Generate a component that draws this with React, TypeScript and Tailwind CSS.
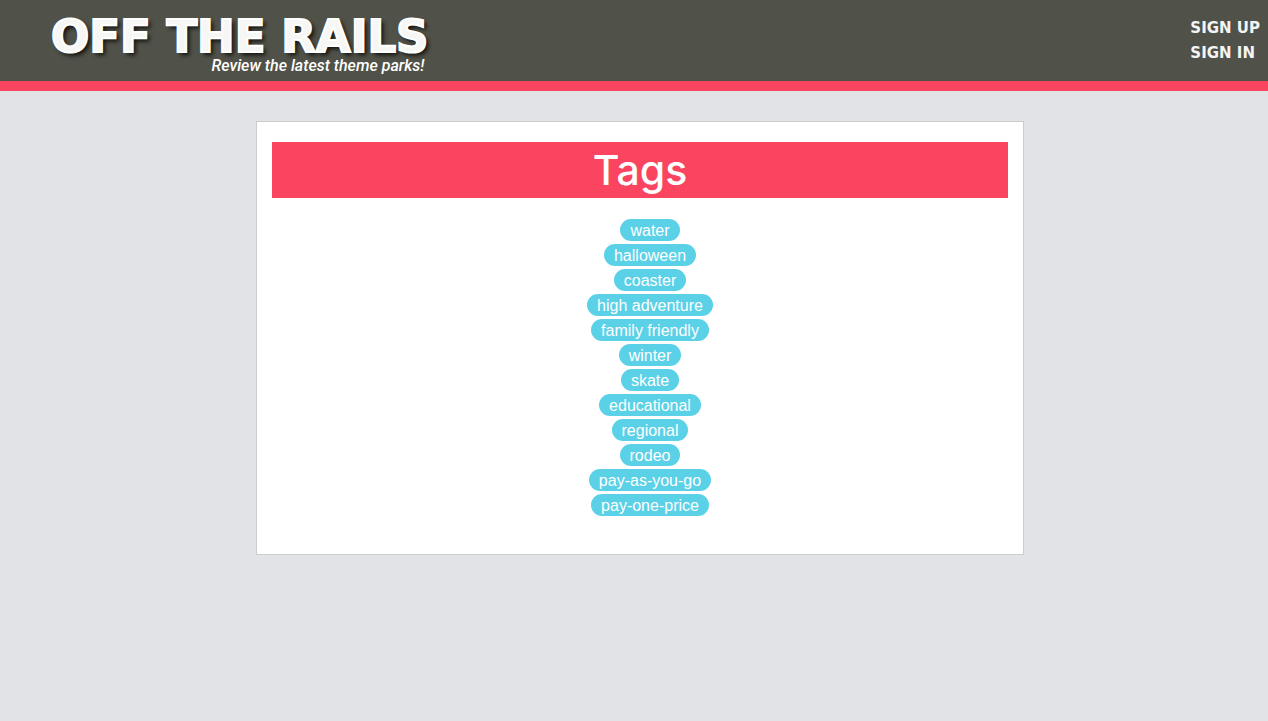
const tags = [
  "water",
  "halloween",
  "coaster",
  "high adventure",
  "family friendly",
  "winter",
  "skate",
  "educational",
  "regional",
  "rodeo",
  "pay-as-you-go",
  "pay-one-price",
];

function Header() {
  return (
    <header className="flex items-start justify-between border-b-[10px] border-[#fa4460] bg-[#505148] pr-2 pl-[51px] text-white antialiased">
      <div className="flex h-[81px] flex-col items-end pt-4">
        <a
          href="/"
          className="font-['DejaVu_Sans',sans-serif] text-[45px] leading-[42px] font-bold whitespace-nowrap text-[#f6f6f5] [-webkit-text-stroke:2px_white] [text-shadow:3px_3px_4px_#000000cc]"
        >
          OFF THE RAILS
        </a>
        <p className="pr-1 font-['Roboto',sans-serif] text-base leading-4 font-medium italic">
          Review the latest theme parks!
        </p>
      </div>
      <nav className="flex flex-col pt-4 font-['DejaVu_Sans',sans-serif] text-[15px] leading-[25px] font-bold text-[#f4f4f4]">
        <a href="/signup">SIGN UP</a>
        <a href="/signin">SIGN IN</a>
      </nav>
    </header>
  );
}

function TagList() {
  return (
    <ul className="mt-[21px] flex flex-col items-center gap-[3px] pl-5">
      {tags.map((tag) => (
        <li key={tag} className="flex">
          <a
            href={`/tags/${tag}`}
            className="rounded-full bg-[#5bd1e7] px-[10px] pt-0.5 font-['Liberation_Sans',sans-serif] text-base leading-5 text-white"
          >
            {tag}
          </a>
        </li>
      ))}
    </ul>
  );
}

export default function App() {
  return (
    <div className="min-h-screen bg-[#e2e3e7]">
      <Header />
      <main className="px-4 pt-[30px] pb-8 lg:pr-61 lg:pl-64">
        <section className="border border-[#cccccc] bg-white px-[15px] pt-5 pb-[38px]">
          <h1 className="bg-[#fa4460] text-center font-['Inter',sans-serif] text-[41px] leading-[56px] font-medium text-white">
            Tags
          </h1>
          <TagList />
        </section>
      </main>
    </div>
  );
}
